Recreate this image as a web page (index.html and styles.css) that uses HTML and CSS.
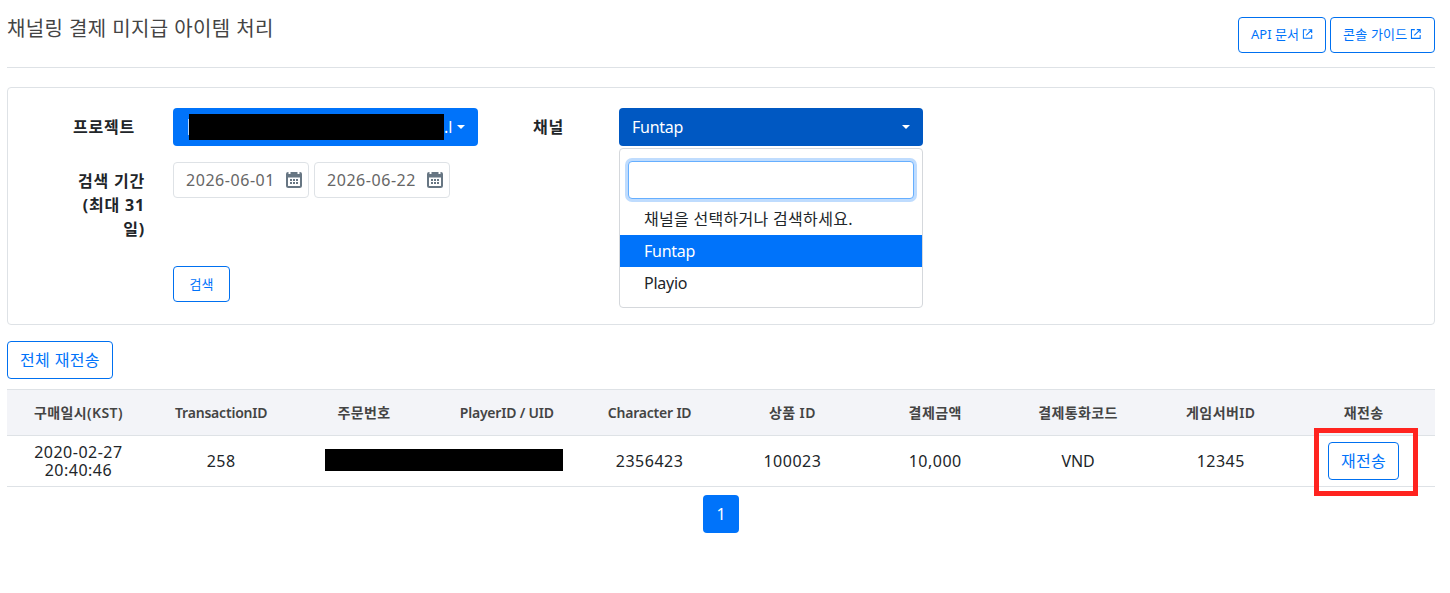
FILE: index.html
```html
<!DOCTYPE html>
<html lang="ko">
<head>
  <meta charset="UTF-8">
  <meta name="viewport" content="width=device-width, initial-scale=1.0">
  <title>채널링 결제 미지급 아이템 처리</title>
  <link rel="stylesheet" href="styles.css">
</head>
<body>
  <header class="page-header">
    <h1>채널링 결제 미지급 아이템 처리</h1>
    <div class="header-links">
      <a class="btn btn-sm btn-api" href="#">API 문서
        <svg class="ext" viewBox="0 0 12 12"><path d="M5 1.5H1.5v9h9V7M7 1.5h3.5V5M10.5 1.5L4.5 7.5"/></svg></a>
      <a class="btn btn-sm btn-guide" href="#">콘솔 가이드
        <svg class="ext" viewBox="0 0 12 12"><path d="M5 1.5H1.5v9h9V7M7 1.5h3.5V5M10.5 1.5L4.5 7.5"/></svg></a>
    </div>
  </header>

  <form class="search-panel">
    <div class="form-row">
      <label class="label-project">프로젝트</label>
      <div class="select select-project">
        <i class="edge"></i><span class="mask"></span><span class="tail">.l</span>
        <i class="caret"></i>
      </div>
      <label class="label-channel">채널</label>
      <div class="select select-channel">
        <span class="latin">Funtap</span>
        <i class="caret"></i>
        <div class="dropdown">
          <input type="text" class="dropdown-search">
          <ul>
            <li class="hint">채널을 선택하거나 검색하세요.</li>
            <li class="latin active">Funtap</li>
            <li class="latin">Playio</li>
          </ul>
        </div>
      </div>
    </div>
    <div class="form-row row-period">
      <label class="label-period">검색 기간<br>(최대 31<br>일)</label>
      <div class="dates">
        <div class="date"><span>2026-06-01</span>
          <svg class="cal" viewBox="0 0 16 16"><path class="cal-frame" d="M1 4v9.5A1.5 1.5 0 0 0 2.5 15h11a1.5 1.5 0 0 0 1.5-1.5V4"/><path class="cal-fill" d="M0 5.500V2Q0 0 2 0h.5v2h2V0h7v2h2V0h.5q2 0 2 2v3.500zM4 7h2v2H4zM7 7h2v2H7zM10 7h2v2h-2zM4 10h2v2H4zM7 10h2v2H7zM10 10h2v2h-2z"/></svg></div>
        <div class="date"><span>2026-06-22</span>
          <svg class="cal" viewBox="0 0 16 16"><path class="cal-frame" d="M1 4v9.5A1.5 1.5 0 0 0 2.5 15h11a1.5 1.5 0 0 0 1.5-1.5V4"/><path class="cal-fill" d="M0 5.500V2Q0 0 2 0h.5v2h2V0h7v2h2V0h.5q2 0 2 2v3.500zM4 7h2v2H4zM7 7h2v2H7zM10 7h2v2h-2zM4 10h2v2H4zM7 10h2v2H7zM10 10h2v2h-2z"/></svg></div>
      </div>
    </div>
    <button type="button" class="btn btn-sm btn-search">검색</button>
  </form>

  <button type="button" class="btn btn-all">전체 재전송</button>

  <table class="result">
    <thead>
      <tr>
        <th>구매일시(KST)</th>
        <th class="latin">TransactionID</th>
        <th>주문번호</th>
        <th class="latin">PlayerID / UID</th>
        <th class="latin">Character ID</th>
        <th>상품 ID</th>
        <th>결제금액</th>
        <th>결제통화코드</th>
        <th>게임서버ID</th>
        <th>재전송</th>
      </tr>
    </thead>
    <tbody>
      <tr>
        <td>2020-02-27<br>20:40:46</td>
        <td>258</td>
        <td colspan="2"><div class="mask mask-cell"></div></td>
        <td>2356423</td>
        <td>100023</td>
        <td>10,000</td>
        <td class="latin">VND</td>
        <td>12345</td>
        <td class="cell-action"><button type="button" class="btn">재전송</button><div class="highlight"></div></td>
      </tr>
    </tbody>
  </table>

  <nav class="pagination">
    <a href="#">1</a>
  </nav>
</body>
</html>
```
FILE: styles.css
```css
* {
  box-sizing: border-box;
}
body {
  font-family: "Noto Sans", "Noto Sans CJK KR", sans-serif;
  font-size: 16px;
  line-height: 24px;
  color: #212529;
  background-color: #fff;
  margin: 0;
  padding: 0 15px 0 7px;
}
.page-header {
  display: flex;
  justify-content: space-between;
  align-items: flex-start;
  height: 68px;
  padding-top: 17px;
  border-bottom: 1px solid #dee2e6;
}
h1 {
  margin: 0;
  font-size: 20px;
  font-weight: 400;
  line-height: 24px;
  letter-spacing: 0.4px;
  color: #444;
}
.header-links {
  display: flex;
  gap: 4px;
}
.btn {
  display: inline-flex;
  align-items: center;
  justify-content: center;
  height: 38px;
  padding: 0 12px 2px;
  border: 1px solid #0070f0;
  border-radius: 4px;
  background-color: #fff;
  color: #0073fa;
  font-family: inherit;
  font-size: 16px;
  letter-spacing: 0.35px;
  text-decoration: none;
  white-space: nowrap;
}
.btn-sm {
  height: 36px;
  font-size: 13px;
  letter-spacing: 0;
}
.btn-api {
  width: 88px;
}
.btn-guide {
  width: 105px;
  letter-spacing: 0.2px;
}
.ext {
  width: 12px;
  height: 12px;
  margin-left: 3px;
  fill: none;
  stroke: #0073fa;
  stroke-width: 1.1;
}
.search-panel {
  height: 238px;
  margin-top: 19px;
  padding: 20px 0 0;
  border: 1px solid #dee2e6;
  border-radius: 4px;
}
.form-row {
  display: flex;
}
.form-row label {
  padding-top: 7px;
  font-weight: 700;
  letter-spacing: 0.8px;
  text-align: right;
}
.label-project {
  width: 127px;
  margin-right: 38px;
}
.label-channel {
  width: 86px;
  margin-right: 55px;
}
.label-period {
  width: 137px;
  margin-right: 28px;
}
.select {
  position: relative;
  display: flex;
  align-items: center;
  height: 38px;
  padding: 0 13px;
  border-radius: 4px;
  color: #fff;
}
.select-project {
  width: 305px;
  background-color: #0073fa;
}
.select-channel {
  width: 304px;
  background-color: #0058c2;
}
.caret {
  margin-left: auto;
  border: 4px solid transparent;
  border-top-color: #fff;
  border-bottom: 0;
}
.mask {
  background-color: #000;
}
.select-project .mask {
  width: 255px;
  height: 26px;
}
.edge {
  width: 1px;
  height: 16px;
  margin-left: 2px;
  background-color: #b3d5fe;
}
.latin {
  letter-spacing: -0.25px;
}
.dropdown {
  position: absolute;
  top: 40px;
  left: 0;
  width: 304px;
  height: 160px;
  padding-top: 12px;
  border: 1px solid #d5d8dc;
  border-radius: 4px;
  background-color: #fff;
  color: #212529;
}
.dropdown-search {
  display: block;
  width: 286px;
  height: 38px;
  margin: 0 8px;
  border: 1px solid #66afff;
  border-radius: 4px;
  outline: none;
  box-shadow: 0 0 0 3px #bfdcfe;
}
.dropdown ul {
  margin: 4px 0 0;
  padding: 0;
  list-style: none;
}
.dropdown li {
  height: 32px;
  padding: 4px 24px;
}
.dropdown .hint {
  letter-spacing: 0.3px;
}
.dropdown .active {
  background-color: #0073fa;
  color: #fff;
}
.row-period {
  margin-top: 16px;
}
.dates {
  display: flex;
  gap: 5px;
}
.date {
  display: flex;
  align-items: center;
  justify-content: space-between;
  width: 136px;
  height: 36px;
  padding: 0 6px 0 12px;
  border: 1px solid #dee2e6;
  border-radius: 4px;
  color: #666;
  letter-spacing: 0.55px;
}
.cal {
  width: 16px;
  height: 16px;
}
.cal-frame {
  fill: none;
  stroke: #677683;
  stroke-width: 2;
}
.cal-fill {
  fill: #677683;
}
.btn-search {
  width: 57px;
  margin: 25px 0 0 165px;
}
.btn-all {
  display: flex;
  margin: 16px 0 10px;
}
.result {
  width: 100%;
  table-layout: fixed;
  border-collapse: separate;
  border-spacing: 0;
  text-align: center;
}
.result th {
  height: 47px;
  padding: 0;
  border: 1px solid #dee2e6;
  border-width: 1px 0;
  background-color: #f3f4f8;
  color: #444;
  font-size: 14px;
  font-weight: 600;
  letter-spacing: 0.4px;
}
.result td {
  height: 51px;
  padding: 0;
  border-bottom: 1px solid #dee2e6;
  line-height: 18px;
  letter-spacing: 0.5px;
}
.result .latin {
  letter-spacing: -0.2px;
}
.mask-cell {
  width: 238px;
  height: 22px;
  margin: -2px 0 0 32px;
}
.cell-action {
  position: relative;
}
.cell-action .btn {
  vertical-align: middle;
}
.highlight {
  position: absolute;
  top: -8px;
  left: 22px;
  width: 104px;
  height: 68px;
  border: 5px solid #ff231f;
}
.pagination {
  display: flex;
  justify-content: center;
  margin-top: 8px;
}
.pagination a {
  width: 36px;
  height: 38px;
  border-radius: 4px;
  background-color: #0073fa;
  color: #fff;
  line-height: 38px;
  text-align: center;
  text-decoration: none;
}
```
